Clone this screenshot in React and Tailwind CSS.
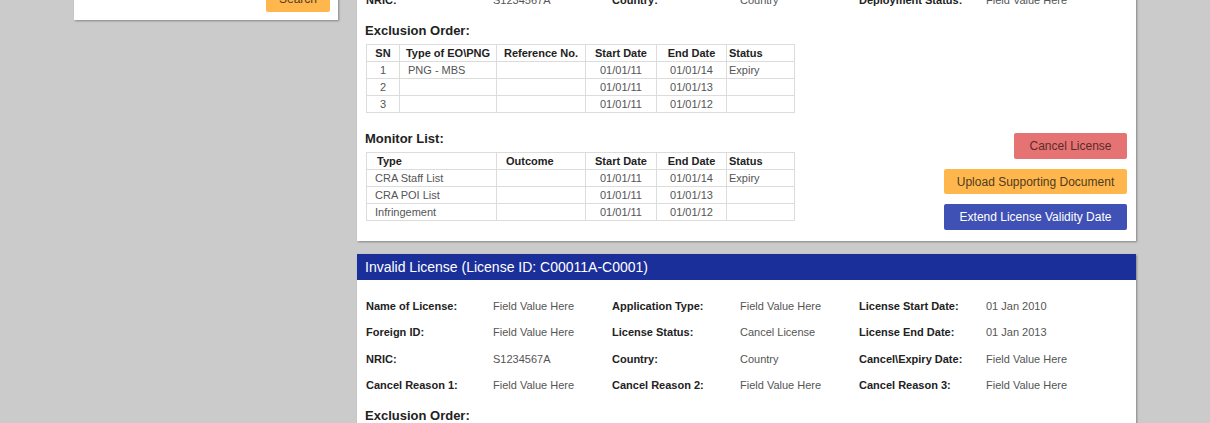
const font = "font-['Liberation_Sans',Arial,sans-serif]";

const eoCols = [
  { label: 'SN', w: 'w-[33px]', head: 'text-center', body: 'text-center' },
  { label: 'Type of EO\\PNG', w: 'w-[97px]', head: 'text-center', body: 'text-left pl-[8px]' },
  { label: 'Reference No.', w: 'w-[89px]', head: 'text-center', body: 'text-center' },
  { label: 'Start Date', w: 'w-[71px]', head: 'text-center', body: 'text-center' },
  { label: 'End Date', w: 'w-[70px]', head: 'text-center', body: 'text-center' },
  { label: 'Status', w: 'w-[68px]', head: 'text-left pl-[2px]', body: 'text-left pl-[2px]' },
];

const eoRows = [
  ['1', 'PNG - MBS', '', '01/01/11', '01/01/14', 'Expiry'],
  ['2', '', '', '01/01/11', '01/01/13', ''],
  ['3', '', '', '01/01/11', '01/01/12', ''],
];

const monitorCols = [
  { label: 'Type', w: 'w-[130px]', head: 'text-left pl-[10px]', body: 'text-left pl-[8px]' },
  { label: 'Outcome', w: 'w-[89px]', head: 'text-left pl-[9px]', body: 'text-left pl-[8px]' },
  { label: 'Start Date', w: 'w-[71px]', head: 'text-center', body: 'text-center' },
  { label: 'End Date', w: 'w-[70px]', head: 'text-center', body: 'text-center' },
  { label: 'Status', w: 'w-[68px]', head: 'text-left pl-[2px]', body: 'text-left pl-[2px]' },
];

const monitorRows = [
  ['CRA Staff List', '', '01/01/11', '01/01/14', 'Expiry'],
  ['CRA POI List', '', '01/01/11', '01/01/13', ''],
  ['Infringement', '', '01/01/11', '01/01/12', ''],
];

function DataTable({ cols, rows }) {
  return (
    <table className="w-[428px] table-fixed border-collapse text-[11px]">
      <thead>
        <tr>
          {cols.map((c) => (
            <th
              key={c.label}
              className={`${c.w} ${c.head} h-[17px] p-0 border border-[#dcdcdc] font-bold text-[#222] leading-none`}
            >
              {c.label}
            </th>
          ))}
        </tr>
      </thead>
      <tbody>
        {rows.map((row, idx) => (
          <tr key={idx}>
            {row.map((cell, i) => (
              <td
                key={i}
                className={`${cols[i].body} h-[17px] p-0 border border-[#dcdcdc] text-[#555] leading-none`}
              >
                {cell}
              </td>
            ))}
          </tr>
        ))}
      </tbody>
    </table>
  );
}

function FieldGrid({ rows }) {
  return (
    <div className="grid grid-cols-[127px_119px_128px_119px_127px_1fr] auto-rows-[26.3px] items-center pl-[9px] text-[11px]">
      {rows.map((row, idx) =>
        row.map((cell, i) => (
          <div
            key={`${idx}-${i}`}
            className={i % 2 === 0 ? 'font-bold text-[#222]' : 'text-[#555]'}
          >
            {cell}
          </div>
        ))
      )}
    </div>
  );
}

function SectionTitle({ children, className = '' }) {
  return (
    <div className={`pl-[8px] text-[13px] leading-[16px] font-bold text-[#222] ${className}`}>
      {children}
    </div>
  );
}

export default function App() {
  return (
    <div className={`${font} flex h-[423px] w-[1210px] overflow-hidden bg-[#cbcbcb]`}>
      {/* sidebar search card, scrolled mostly out of view */}
      <div className="ml-[74px] w-[264px]">
        <div className="-mt-[20px] flex justify-end bg-white pr-[8px] pb-[8px] pt-[6px] shadow-[1px_1px_2px_rgba(0,0,0,0.35)]">
          <button className="h-[26px] w-[64px] rounded-[2px] bg-[#ffb74d] text-[12px] text-[#4e3a20]">
            Search
          </button>
        </div>
      </div>

      <div className="ml-[19px] w-[779px]">
        {/* active license card */}
        <div className="-mt-[13px] bg-white pb-[11px] shadow-[1px_1px_2px_rgba(0,0,0,0.35)]">
          <FieldGrid
            rows={[['NRIC:', 'S1234567A', 'Country:', 'Country', 'Deployment Status:', 'Field Value Here']]}
          />
          <div className="flex items-end justify-between pr-[9px]">
            <div className="mb-[9px]">
              <SectionTitle className="mt-[10px]">Exclusion Order:</SectionTitle>
              <div className="mt-[5px] pl-[9px]">
                <DataTable cols={eoCols} rows={eoRows} />
              </div>
              <SectionTitle className="mt-[18px]">Monitor List:</SectionTitle>
              <div className="mt-[5px] pl-[9px]">
                <DataTable cols={monitorCols} rows={monitorRows} />
              </div>
            </div>
            <div className="flex flex-col items-end gap-[10px] text-[12px]">
              <button className="h-[26px] w-[113px] rounded-[2px] bg-[#e57373] text-[#5b2b2b]">
                Cancel License
              </button>
              <button className="h-[25px] w-[183px] rounded-[2px] bg-[#ffb74d] text-[#4e3a20]">
                Upload Supporting Document
              </button>
              <button className="h-[26px] w-[183px] rounded-[2px] bg-[#3f51b5] text-white">
                Extend License Validity Date
              </button>
            </div>
          </div>
        </div>

        {/* invalid license card */}
        <div className="mt-[13px] bg-white shadow-[1px_1px_2px_rgba(0,0,0,0.35)]">
          <div className="flex h-[26px] items-center bg-[#1b2f9b] pl-[8px] text-[14px] text-white">
            Invalid License (License ID: C00011A-C0001)
          </div>
          <div className="pt-[13px]">
            <FieldGrid
              rows={[
                ['Name of License:', 'Field Value Here', 'Application Type:', 'Field Value Here', 'License Start Date:', '01 Jan 2010'],
                ['Foreign ID:', 'Field Value Here', 'License Status:', 'Cancel License', 'License End Date:', '01 Jan 2013'],
                ['NRIC:', 'S1234567A', 'Country:', 'Country', 'Cancel\\Expiry Date:', 'Field Value Here'],
                ['Cancel Reason 1:', 'Field Value Here', 'Cancel Reason 2:', 'Field Value Here', 'Cancel Reason 3:', 'Field Value Here'],
              ]}
            />
          </div>
          <SectionTitle className="mt-[10px]">Exclusion Order:</SectionTitle>
          <div className="h-[40px]" />
        </div>
      </div>
    </div>
  );
}
